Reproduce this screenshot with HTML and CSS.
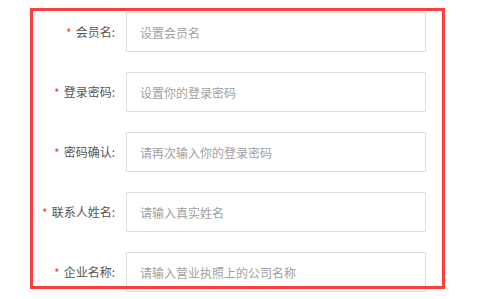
FILE: index.html
```html
<!DOCTYPE html>
<html>

<head>
    <meta name="viewport" content="width=device-width, initial-scale=1">
    <title>注册</title>
    <link rel="stylesheet" href="styles.css">
</head>

<body>
    <div class="register-form">
        <div class="form-item">
            <label class="form-label"><span class="required">*</span>会员名:</label>
            <input class="form-input" type="text" placeholder="设置会员名">
        </div>

        <div class="form-item">
            <label class="form-label"><span class="required">*</span>登录密码:</label>
            <input class="form-input" type="password" placeholder="设置你的登录密码">
        </div>

        <div class="form-item">
            <label class="form-label"><span class="required">*</span>密码确认:</label>
            <input class="form-input" type="password" placeholder="请再次输入你的登录密码">
        </div>

        <div class="form-item">
            <label class="form-label"><span class="required">*</span>联系人姓名:</label>
            <input class="form-input" type="text" placeholder="请输入真实姓名">
        </div>

        <div class="form-item">
            <label class="form-label"><span class="required">*</span>企业名称:</label>
            <input class="form-input" type="text" placeholder="请输入营业执照上的公司名称">
        </div>

        <div class="highlight-frame"></div>
    </div>
</body>

</html>
```

FILE: styles.css
```css
:root {
    --text-color: #555555;
    --placeholder-color: #a0a0a0;
    --border-color: #dddddd;
    --required-color: #ff3b3b;
    --frame-color: #ff3b3b;
}

html,
body {
    margin: 0;
    padding: 0;
    background-color: #ffffff;
    overflow: hidden;
}

body {
    font-family: "Noto Sans CJK SC", "Liberation Sans", sans-serif;
    font-size: 12px;
    color: var(--text-color);
}

.register-form {
    position: relative;
    display: flex;
    flex-direction: column;
    gap: 20px;
    padding-top: 12px;
}

.form-item {
    display: flex;
    align-items: center;
    height: 40px;
}

.form-label {
    width: 115px;
    text-align: right;
    font-size: 12px;
    color: var(--text-color);
    white-space: nowrap;
}

.required {
    color: var(--required-color);
    font-size: 12px;
    margin-right: 4px;
    vertical-align: -1px;
}

.form-input {
    box-sizing: border-box;
    width: 300px;
    height: 40px;
    margin: 0 0 0 11px;
    padding: 0 0 0 13px;
    border: 1px solid var(--border-color);
    border-radius: 0;
    outline: none;
    font-family: inherit;
    font-size: 12px;
    color: var(--text-color);
    background-color: #ffffff;
}

.form-input::placeholder {
    color: var(--placeholder-color);
}

/* red annotation box drawn over the form */
.highlight-frame {
    position: absolute;
    left: 30px;
    top: 8px;
    width: 415px;
    height: 281px;
    box-sizing: border-box;
    border: 3px solid var(--frame-color);
    pointer-events: none;
}
```
